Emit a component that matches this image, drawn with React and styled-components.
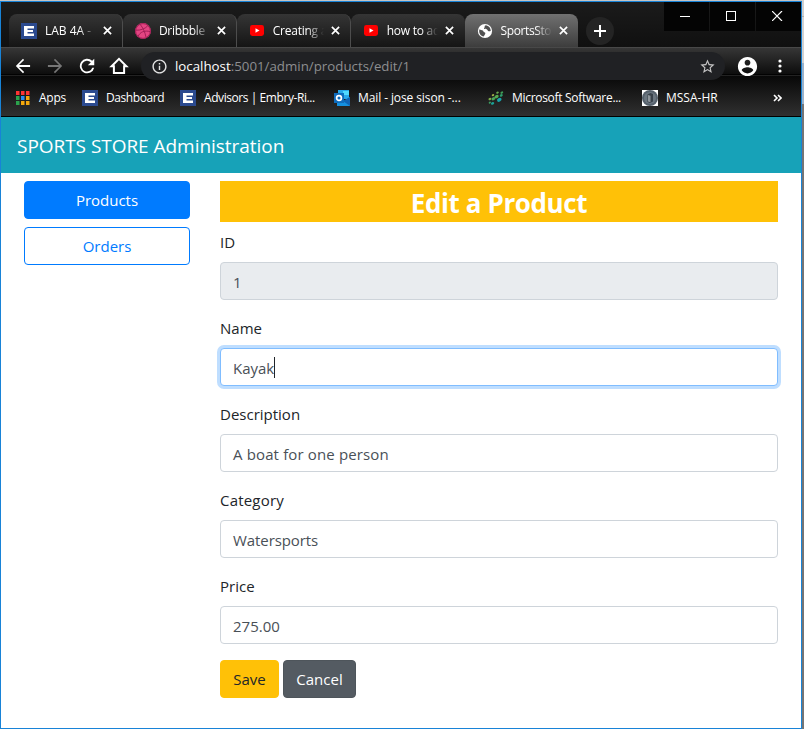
import React from 'react';
import styled, { createGlobalStyle, css } from 'styled-components';

const GlobalStyle = createGlobalStyle`
  *, *::before, *::after { box-sizing: border-box; }
  body { margin: 0; background: #777; overflow: hidden; }
  button, input { font: inherit; margin: 0; }
`;

const Desktop = styled.div`
  width: 804px;
  height: 729px;
  padding-top: 1px;
  background:
    linear-gradient(#cfcfcf 0 16px, #b0b0b0 16px 17px, #d2d2d2 17px 63px, #9cb3cb 63px 104px, #757575 104px)
      right top / 2px 100% no-repeat,
    #c4c4c4;
  font-family: 'Open Sans', 'Noto Sans', sans-serif;
`;

const Window = styled.div`
  display: flex;
  flex-direction: column;
  width: 802px;
  height: 728px;
  border: 1px solid #1883d7;
  background: #fff;
`;

const Chrome = styled.header`
  flex: none;
  height: 115px;
  border-bottom: 1px solid #000;
  color: #fff;
  background:
    linear-gradient(#1b1b1b, #101010) 0 0 / 100% 45px no-repeat,
    linear-gradient(#484848 0 1px, #363636 1px, #0d0d0d 27px, #020202 27px 28px, #222 28px) 0 45px / 100% 29px no-repeat,
    linear-gradient(#080808, #303030) 0 74px / 100% 40px no-repeat;
`;

const TabStrip = styled.div`
  display: flex;
  align-items: flex-start;
  height: 45px;
  padding-left: 8px;
`;

const TabBox = styled.div`
  display: flex;
  align-items: center;
  width: 113.9px;
  height: 33px;
  margin-top: 12px;
  padding: 0 10px 0 12px;
  border-radius: 8px 8px 0 0;
  background: linear-gradient(#353535, #151515);
  border-right: 1px solid ${(p) => (p.$divider ? '#4d4d4d' : 'transparent')};
  ${(p) =>
    p.$active &&
    css`
      background: linear-gradient(#717171, #3d3d3d);
      border-right: 0;
    `}
`;

const TabIcon = styled.span`
  display: flex;
  justify-content: center;
  width: 16px;
  flex: none;
`;

const TabTitle = styled.span`
  width: 51px;
  margin-left: 8px;
  flex: none;
  overflow: hidden;
  white-space: nowrap;
  font-size: 12px;
  line-height: 18px;
  letter-spacing: ${(p) => p.$spacing}px;
  mask-image: linear-gradient(90deg, #000 34px, transparent 51px);
`;

const CloseIcon = styled.svg`
  width: 9px;
  height: 9px;
  margin-left: 7px;
  flex: none;
`;

const NewTab = styled.div`
  display: flex;
  align-items: center;
  justify-content: center;
  width: 28px;
  height: 28px;
  margin: 15px 0 0 8px;
  border-radius: 50%;
  background: #242424;
`;

const WindowButtons = styled.div`
  display: flex;
  gap: 1px;
  margin-left: auto;
`;

const WindowButton = styled.div`
  display: flex;
  align-items: center;
  justify-content: center;
  width: 45px;
  height: 29px;
  padding: 0 2px 1px 0;
  background: #040404;
`;

const Toolbar = styled.div`
  display: flex;
  align-items: center;
  height: 38px;
  padding-left: 12px;
`;

const NavIcons = styled.div`
  display: flex;
  gap: 12px;
  margin-right: 12px;
`;

const Omnibox = styled.div`
  display: flex;
  align-items: center;
  width: 584px;
  height: 28px;
  padding: 0 9px 0 10px;
  border-radius: 14px;
  background: #202124;
`;

const Url = styled.span`
  flex: 1;
  margin-left: 7px;
  font-size: 13.3px;
  line-height: 20px;
  color: #8d8e90;
  white-space: nowrap;
`;

const UrlHost = styled.span`
  color: #fff;
`;

const ToolbarEnd = styled.div`
  display: flex;
  align-items: center;
  gap: 19px;
  margin-left: 11px;
`;

const Bookmarks = styled.div`
  display: flex;
  align-items: center;
  height: 26px;
  padding-left: 13px;
`;

const Bookmark = styled.div`
  display: flex;
  align-items: center;
  width: ${(p) => p.$width}px;
  flex: none;
`;

const BookmarkName = styled.span`
  margin-left: 8px;
  font-size: 12px;
  line-height: 18px;
  white-space: nowrap;
  letter-spacing: ${(p) => p.$spacing}px;
`;

const Chevrons = styled.svg`
  width: 9px;
  height: 8px;
  margin: 0 19px 0 auto;
`;

const Navbar = styled.nav`
  flex: none;
  height: 56px;
  padding: 0 16px;
  background: #17a2b8;
  color: #fff;
  font-size: 19px;
  line-height: 58px;
  letter-spacing: -0.04px;
`;

const Page = styled.div`
  display: grid;
  grid-template-columns: 166px 558px;
  column-gap: 30px;
  padding: 8px 23px 0;
  font-size: 15px;
  line-height: 24px;
  color: #212529;
`;

const Sidebar = styled.aside`
  display: flex;
  flex-direction: column;
  gap: 8px;
`;

const buttonColors = {
  primary: css`background: #007bff; border-color: #007bff; color: #fff;`,
  outline: css`background: #fff; border-color: #007bff; color: #007bff;`,
  warning: css`background: #ffc107; border-color: #ffc107; color: #212529;`,
  secondary: css`background: #545b62; border-color: #4e555b; color: #fff;`,
};

const Button = styled.button`
  width: ${(p) => (p.$width ? `${p.$width}px` : '100%')};
  height: 38px;
  padding: 0;
  border: 1px solid;
  border-radius: 4px;
  line-height: 24px;
  ${(p) => buttonColors[p.$kind]}
`;

const Heading = styled.h3`
  margin: 0;
  height: 41px;
  background: #ffc107;
  color: #fff;
  text-align: center;
  font-size: 26px;
  font-weight: 700;
  line-height: 44px;
  letter-spacing: -0.4px;
`;

const Form = styled.form`
  padding-top: 8px;
`;

const Field = styled.div`
  margin-bottom: 16px;
`;

const Label = styled.label`
  display: block;
  height: 24px;
  margin-bottom: 8px;
  line-height: 25px;
  letter-spacing: ${(p) => p.$spacing || 0}px;
`;

const Control = styled.div`
  display: flex;
  align-items: center;
  height: 38px;
  padding: 2px 12px 0;
  border: 1px solid #ced4da;
  border-radius: 4px;
  background: #fff;
  color: #495057;
  letter-spacing: ${(p) => p.$spacing || 0}px;
  ${(p) =>
    p.$readOnly &&
    css`
      background: #e9ecef;
    `}
  ${(p) =>
    p.$focused &&
    css`
      border-color: #80bdff;
      box-shadow: 0 0 0 3px #bfdeff;
    `}
`;

const Caret = styled.span`
  width: 1px;
  height: 21px;
  margin-top: -1px;
  background: #212529;
`;

const Actions = styled.div`
  display: flex;
  gap: 4px;
`;

const LetterE = () => (
  <svg width="16" height="16" viewBox="0 0 16 16">
    <rect width="16" height="16" fill="#2b4a8f" />
    <path d="M3 3h10v2.5H6.5V7H12v2H6.5v1.5H13V13H3z" fill="#fff" />
  </svg>
);

const Dribbble = () => (
  <svg width="16" height="16" viewBox="0 0 16 16">
    <circle cx="8" cy="8" r="7.9" fill="#e34582" />
    <g fill="none" stroke="#a31f57" strokeWidth="1">
      <circle cx="8" cy="8" r="7.4" />
      <path d="M5 1.2c3 3.5 5 8 6 13M.7 7.2c5 .2 9-1.2 12-4.3M3 13.5c2-4.5 6.5-6.5 12.3-4.8" />
    </g>
  </svg>
);

const YouTube = () => (
  <svg width="14" height="11" viewBox="0 0 14 11">
    <rect width="14" height="11" rx="2.4" fill="#f00" />
    <path d="M5.5 3.2v4.6l4-2.3z" fill="#fff" />
  </svg>
);

const Globe = () => (
  <svg width="16" height="16" viewBox="0 0 16 16">
    <circle cx="8" cy="8" r="7.1" fill="#fff" />
    <path
      d="M2.5 6.2c1 1 2.3.9 3.3 1.3 1 .5.4 1.5 1.5 1.8 1.2.3 1.3 1.2.6 2.2-.5.7-.6 1.5-1.3 2C3.8 13 1.9 10.5 2.2 7.5zM9 2.3c-1 .2-1.6.9-1.3 1.5.4.6-.9.9-.6 1.7.4.8 2 .3 2.9.9.8.5.6 1.6 1.7 1.8.8.2 1.5-.1 2.1-.5C13.6 5 11.8 2.7 9 2.3z"
      fill="#505050"
    />
  </svg>
);

const Close = () => (
  <CloseIcon viewBox="0 0 9 9">
    <path d="M.9.9l7.2 7.2M8.1.9L.9 8.1" stroke="#fff" strokeWidth="1.7" />
  </CloseIcon>
);

const MaterialIcon = ({ d, size = 20, color = '#fff' }) => (
  <svg width={size} height={size} viewBox="0 0 24 24" fill={color}>
    <path d={d} />
  </svg>
);

const paths = {
  back: 'M20.5 10.9H7.2l6.1-6.1L12 3.4 3.4 12l8.6 8.6 1.4-1.4-6.2-6.1h13.3z',
  forward: 'M3.5 10.9h13.3l-6.1-6.1L12 3.4l8.6 8.6-8.6 8.6-1.4-1.4 6.2-6.1H3.5z',
  reload: 'M18.2 5.8A8.7 8.7 0 1 0 20.6 14h-2.3a6.5 6.5 0 1 1-1.7-6.6L13 11h7.7V3.3z',
  info: 'M11 7h2v2h-2zm0 4h2v6h-2zm1-9C6.48 2 2 6.48 2 12s4.48 10 10 10 10-4.48 10-10S17.52 2 12 2zm0 18c-4.41 0-8-3.59-8-8s3.59-8 8-8 8 3.59 8 8-3.59 8-8 8z',
  star: 'M22 9.24l-7.19-.62L12 2 9.19 8.63 2 9.24l5.46 4.73L5.82 21 12 17.27 18.18 21l-1.63-7.03L22 9.24zM12 15.4l-3.76 2.27 1-4.28-3.32-2.88 4.38-.38L12 6.1l1.71 4.04 4.38.38-3.32 2.88 1 4.28L12 15.4z',
  account:
    'M12 2C6.48 2 2 6.48 2 12s4.48 10 10 10 10-4.48 10-10S17.52 2 12 2zm0 3c1.66 0 3 1.34 3 3s-1.34 3-3 3-3-1.34-3-3 1.34-3 3-3zm0 14.2c-2.5 0-4.71-1.28-6-3.22.03-1.99 4-3.08 6-3.08 1.99 0 5.97 1.09 6 3.08-1.29 1.94-3.5 3.22-6 3.22z',
};

const Home = () => (
  <svg width="20" height="20" viewBox="0 0 20 20" fill="none" stroke="#fff" strokeWidth="2">
    <path d="M2.6 10.2L10 2.9l7.4 7.3h-2.3V17H4.9v-6.8z" />
  </svg>
);

const Kebab = () => (
  <svg width="4" height="14" viewBox="0 0 4 14" fill="#fff">
    <circle cx="2" cy="2" r="1.6" />
    <circle cx="2" cy="7" r="1.6" />
    <circle cx="2" cy="12" r="1.6" />
  </svg>
);

const appColors = ['#f33', '#f33', '#f33', '#2ba24c', '#2a8cf0', '#f5a80c', '#2ba24c', '#f5a80c', '#f5a80c'];

const AppsGrid = () => (
  <svg width="17" height="16" viewBox="0 0 17 16">
    {appColors.map((color, i) => (
      <rect key={i} x={2 + (i % 3) * 5} y={1 + Math.floor(i / 3) * 5} width="3.5" height="4" fill={color} />
    ))}
  </svg>
);

const Outlook = () => (
  <svg width="16" height="16" viewBox="0 0 16 16">
    <rect x="4" y="0" width="11" height="9" fill="#28a8ea" />
    <rect x="9" y="1" width="6" height="4" fill="#50d9ff" />
    <path d="M3 7l6.5 4L16 7v9H3z" fill="#1490df" />
    <path d="M16 7v9L9 11z" fill="#0f63b5" />
    <rect x="0" y="3" width="10" height="10" fill="#0f6cbd" />
    <circle cx="5" cy="8" r="2.4" fill="none" stroke="#fff" strokeWidth="1.7" />
  </svg>
);

const leaves = [
  [9.5, 2.6, 1.4, '#6aa84f'],
  [13.8, 2.6, 1.5, '#3f9b57'],
  [5, 5.2, 1.3, '#a3b54a'],
  [8.6, 6.6, 2.2, '#56a94f'],
  [13.3, 5.4, 1.6, '#2f9b6a'],
  [1.9, 9, 1.5, '#7fae4a'],
  [5.4, 8.8, 2, '#4aa35a'],
  [11.3, 9.8, 2.4, '#17a3a8'],
  [1.8, 12.6, 1.2, '#3c9e63'],
  [4.6, 13.4, 1.7, '#1aa397'],
];

const Academy = () => (
  <svg width="16" height="16" viewBox="0 0 16 16">
    {leaves.map(([x, y, r, fill]) => (
      <ellipse key={`${x}-${y}`} cx={x} cy={y} rx={r} ry={r * 0.75} fill={fill} transform={`rotate(-30 ${x} ${y})`} />
    ))}
  </svg>
);

const Badge = () => (
  <svg width="16" height="16" viewBox="0 0 16 16">
    <rect width="16" height="16" fill="#fff" />
    <circle cx="8" cy="8" r="8" fill="#56616c" />
    <circle cx="8" cy="8" r="6" fill="#6b7680" />
    <path d="M5.5 4.5l3-1.5 2.5 1v7.5l-3 1.5-2.500-1z" fill="#39424b" />
    <path d="M6 5l2.500.8v6.500L6 11.500z" fill="#8f969c" />
  </svg>
);

const tabs = [
  { icon: LetterE, title: 'LAB 4A - ', spacing: 0, divider: true },
  { icon: Dribbble, title: 'Dribbble', spacing: -0.3, divider: true },
  { icon: YouTube, title: 'Creating a', spacing: -0.25, divider: true },
  { icon: YouTube, title: 'how to ad', spacing: -0.25 },
  { icon: Globe, title: 'SportsSto', spacing: -0.4, active: true },
];

const bookmarks = [
  { icon: AppsGrid, name: 'Apps', width: 68, spacing: -0.25 },
  { icon: LetterE, name: 'Dashboard', width: 98, spacing: -0.43 },
  { icon: LetterE, name: 'Advisors | Embry-Ri...', width: 154, spacing: -0.43 },
  { icon: Outlook, name: 'Mail - jose sison -...', width: 154, spacing: -0.1 },
  { icon: Academy, name: 'Microsoft Software...', width: 154, spacing: -0.3 },
  { icon: Badge, name: 'MSSA-HR', width: 90, spacing: 0 },
];

const fields = [
  { label: 'ID', value: '1', readOnly: true },
  { label: 'Name', value: 'Kayak', focused: true },
  { label: 'Description', value: 'A boat for one person', spacing: 0.14 },
  { label: 'Category', value: 'Watersports', labelSpacing: 0.2, spacing: -0.08 },
  { label: 'Price', value: '275.00' },
];

export default function App() {
  return (
    <Desktop>
      <GlobalStyle />
      <Window>
        <Chrome>
          <TabStrip>
            {tabs.map(({ icon: Icon, title, spacing, divider, active }) => (
              <TabBox key={title} $active={active} $divider={divider}>
                <TabIcon><Icon /></TabIcon>
                <TabTitle $spacing={spacing}>{title}</TabTitle>
                <Close />
              </TabBox>
            ))}
            <NewTab>
              <svg width="12" height="12" viewBox="0 0 12 12">
                <path d="M6 0v12M0 6h12" stroke="#fff" strokeWidth="2" />
              </svg>
            </NewTab>
            <WindowButtons>
              <WindowButton>
                <svg width="11" height="10"><path d="M0 5.5h10" stroke="#fff" /></svg>
              </WindowButton>
              <WindowButton>
                <svg width="11" height="10"><rect x=".5" y=".5" width="9" height="9" fill="none" stroke="#fff" /></svg>
              </WindowButton>
              <WindowButton>
                <svg width="11" height="10"><path d="M0 0l10 10M10 0L0 10" stroke="#fff" strokeWidth="1.2" /></svg>
              </WindowButton>
            </WindowButtons>
          </TabStrip>
          <Toolbar>
            <NavIcons>
              <MaterialIcon d={paths.back} />
              <MaterialIcon d={paths.forward} color="#777" />
              <MaterialIcon d={paths.reload} />
              <Home />
            </NavIcons>
            <Omnibox>
              <MaterialIcon d={paths.info} size={17} color="#e4e4e4" />
              <Url><UrlHost>localhost</UrlHost>:5001/admin/products/edit/1</Url>
              <MaterialIcon d={paths.star} size={17} color="#c4c4c4" />
            </Omnibox>
            <ToolbarEnd>
              <MaterialIcon d={paths.account} size={23} />
              <Kebab />
            </ToolbarEnd>
          </Toolbar>
          <Bookmarks>
            {bookmarks.map(({ icon: Icon, name, width, spacing }) => (
              <Bookmark key={name} $width={width}>
                <Icon />
                <BookmarkName $spacing={spacing}>{name}</BookmarkName>
              </Bookmark>
            ))}
            <Chevrons viewBox="0 0 9 8">
              <path d="M1 1l3 3-3 3M5 1l3 3-3 3" fill="none" stroke="#fff" strokeWidth="1.6" />
            </Chevrons>
          </Bookmarks>
        </Chrome>
        <Navbar>SPORTS STORE Administration</Navbar>
        <Page>
          <Sidebar>
            <Button type="button" $kind="primary">Products</Button>
            <Button type="button" $kind="outline">Orders</Button>
          </Sidebar>
          <main>
            <Heading>Edit a Product</Heading>
            <Form>
              {fields.map((f) => (
                <Field key={f.label}>
                  <Label $spacing={f.labelSpacing}>{f.label}</Label>
                  <Control $readOnly={f.readOnly} $focused={f.focused} $spacing={f.spacing}>
                    {f.value}
                    {f.focused && <Caret />}
                  </Control>
                </Field>
              ))}
              <Actions>
                <Button type="button" $kind="warning" $width={59}>Save</Button>
                <Button type="button" $kind="secondary" $width={73}>Cancel</Button>
              </Actions>
            </Form>
          </main>
        </Page>
      </Window>
    </Desktop>
  );
}
